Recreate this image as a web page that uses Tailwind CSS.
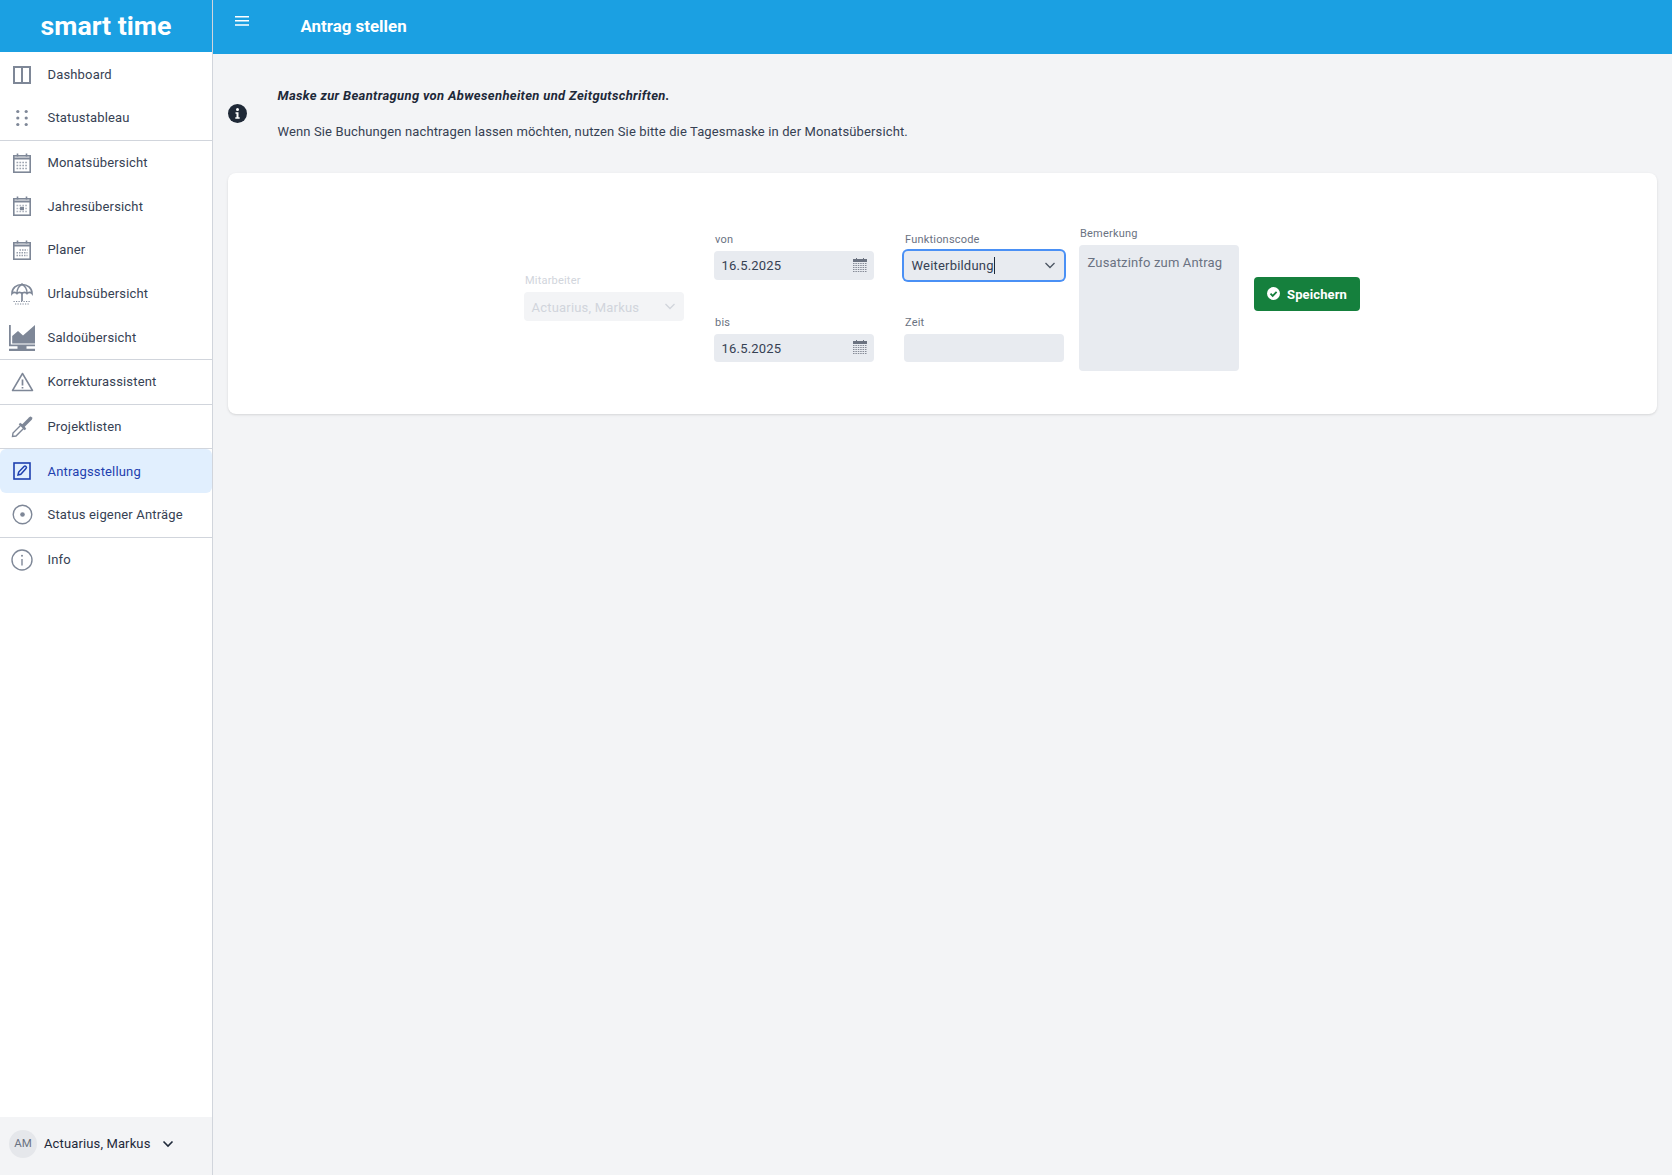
<!DOCTYPE html>
<html lang="de">
<head>
<meta charset="UTF-8" />
<title>smart time - Antrag stellen</title>
<script src="https://cdn.jsdelivr.net/npm/@tailwindcss/browser@4"></script>
</head>
<body class="bg-gray-100 font-[Roboto,sans-serif] text-gray-700">
<div class="flex h-[1175px] w-[1672px] overflow-hidden">

  <!-- sidebar -->
  <aside class="flex w-[213px] shrink-0 flex-col border-r border-gray-300 bg-white">
    <div class="flex h-[52px] shrink-0 items-center justify-center bg-[#1ba0e2] text-[26.7px] font-bold text-white">smart time</div>

    <nav class="flex-1 text-[13px] tracking-[0.16px]">
      <div class="border-b border-gray-300">
        <a class="flex h-[45px] items-center">
          <span class="mr-[3.5px] flex w-[44px] justify-center text-[#7e8797]">
            <svg width="20" height="20" viewBox="0 0 20 20" fill="none" stroke="currentColor" stroke-width="2"><rect x="2" y="2" width="16" height="16"/><path d="M10 2v16"/></svg>
          </span>Dashboard</a>
        <a class="flex h-[43px] items-center pb-[2px]">
          <span class="mr-[3.5px] flex w-[44px] justify-center text-[#7e8797]">
            <svg width="20" height="20" viewBox="0 0 20 20" fill="currentColor"><circle cx="5.800" cy="3.500" r="1.600"/><circle cx="14.200" cy="3.500" r="1.600"/><circle cx="5.800" cy="10" r="1.600"/><circle cx="14.200" cy="10" r="1.600"/><circle cx="5.800" cy="16.500" r="1.600"/><circle cx="14.200" cy="16.500" r="1.600"/></svg>
          </span>Statustableau</a>
      </div>

      <div class="border-b border-gray-300">
        <a class="flex h-[43.6px] items-center">
          <span class="mr-[3.5px] flex w-[44px] justify-center text-[#7e8797]">
            <svg width="20" height="20" viewBox="0 0 20 20" fill="none" stroke="currentColor"><rect x="1.800" y="2.800" width="16.400" height="16.400" stroke-width="1.600"/><path d="M1.800 5.500h16.400" stroke-width="2"/><path d="M5.500 .5v3M14.500 .5v3" stroke-width="1.600"/><path d="M4.500 9.500h11M4.500 12.500h11M4.500 15.500h11" stroke-width="1.700" stroke-dasharray="1.700 1.200" opacity=".75"/></svg>
          </span>Monatsübersicht</a>
        <a class="flex h-[43.6px] items-center">
          <span class="mr-[3.5px] flex w-[44px] justify-center text-[#7e8797]">
            <svg width="20" height="20" viewBox="0 0 20 20" fill="none" stroke="currentColor"><rect x="1.800" y="2.800" width="16.400" height="16.400" stroke-width="1.600"/><path d="M1.800 5.500h16.400" stroke-width="2"/><path d="M5.500 .5v3M14.500 .5v3" stroke-width="1.600"/><path d="M4.500 9.500h11M4.500 12.500h11M4.500 15.500h11" stroke-width="1.700" stroke-dasharray="1.700 1.200" opacity=".6"/><rect x="8" y="10.800" width="4" height="3.400" fill="currentColor" stroke="none"/></svg>
          </span>Jahresübersicht</a>
        <a class="flex h-[43.6px] items-center">
          <span class="mr-[3.5px] flex w-[44px] justify-center text-[#7e8797]">
            <svg width="20" height="20" viewBox="0 0 20 20" fill="none" stroke="currentColor"><rect x="1.800" y="2.800" width="16.400" height="16.400" stroke-width="1.600"/><path d="M1.800 5.500h16.400" stroke-width="2"/><path d="M5.500 .5v3M14.500 .5v3" stroke-width="1.600"/><path d="M7.500 10h8M4.500 12.700h11M4.500 15.400h11" stroke-width="1.500" stroke-dasharray="1.500 1" opacity=".8"/></svg>
          </span>Planer</a>
        <a class="flex h-[43.6px] items-center">
          <span class="mr-[3.5px] flex w-[44px] justify-center text-[#7e8797]">
            <svg width="22" height="22" viewBox="0 0 22 22" fill="none" stroke="currentColor" stroke-width="1.700"><path d="M1 10.500C1 5 5.500 1.500 11 1.500S21 5 21 10.500c-1.200-1.600-3.800-1.600-5 0-1.200-1.600-3.800-1.600-5 0-1.200-1.600-3.800-1.600-5 0-1.200-1.600-3.800-1.600-5 0Z"/><path d="M6 10c0-4 2-7 5-8.500 3 1.500 5 4.500 5 8.500" stroke-width="1.400"/><path d="M11 .5v1M11 9.500v8.500"/><path d="M2.500 18.500h17M4 21h14" stroke-width="1.200" stroke-dasharray="1.200 1.300"/></svg>
          </span>Urlaubsübersicht</a>
        <a class="flex h-[43.6px] items-center pt-[1px]">
          <span class="mr-[3.5px] flex w-[44px] justify-center text-[#7e8797]">
            <svg width="26" height="26" viewBox="0 0 26 26" fill="currentColor"><path d="M0 0h1.800v20H0z"/><path d="M3.200 18.500V11l5.800-5 5 4.500L26 0v18.500Z"/><path d="M0 19.500h26v1.800H0zM8.500 21.300h9v2.500h-9zM0 23.800h26V26H0z"/></svg>
          </span>Saldoübersicht</a>
      </div>

      <div class="border-b border-gray-300">
        <a class="flex h-[44px] items-center">
          <span class="mr-[3.5px] flex w-[44px] justify-center text-[#7e8797]">
            <svg width="23" height="20" viewBox="0 0 23 20" fill="none" stroke="currentColor" stroke-width="1.500"><path d="M11.500 1.500 1.500 18.500h20Z" stroke-linejoin="round"/><path d="M11.500 7.500v6M11.500 15v1.500" stroke-width="1.700"/></svg>
          </span>Korrekturassistent</a>
      </div>

      <div class="border-b border-gray-300">
        <a class="flex h-[43px] items-center">
          <span class="mr-[3.5px] flex w-[44px] justify-center text-[#7e8797]">
            <svg width="23" height="23" viewBox="0 0 23 23" fill="none" stroke="currentColor"><path d="M10.500 9.500 13.500 12.500 5 21l-3.500.500L2 18Z" stroke-width="1.400"/><path d="m8.500 8.500 6 6" stroke-width="2.200"/><path d="m12.500 10.500 7-7" stroke-width="3.600" stroke-linecap="round"/></svg>
          </span>Projektlisten</a>
      </div>

      <div class="border-b border-gray-300">
        <a class="flex h-[44px] items-center rounded-md bg-[#e1effe] pt-[1px] text-[#1e40af]">
          <span class="mr-[3.5px] flex w-[44px] justify-center">
            <svg width="18" height="18" viewBox="0 0 18 18" fill="none" stroke="currentColor" stroke-width="1.600"><rect x="1" y="1" width="16" height="16"/><path d="M5 13l.7-3L11 4.500a1.300 1.300 0 0 1 2 2L7.800 12.300Z" stroke-width="1.500"/></svg>
          </span>Antragsstellung</a>
        <a class="flex h-[44px] items-center">
          <span class="mr-[3.5px] flex w-[44px] justify-center text-[#7e8797]">
            <svg width="21" height="21" viewBox="0 0 21 21" fill="none" stroke="currentColor" stroke-width="1.400"><circle cx="10.500" cy="10.500" r="9.300"/><circle cx="10.500" cy="10.500" r="2.300" fill="currentColor" stroke="none"/></svg>
          </span>Status eigener Anträge</a>
      </div>

      <a class="flex h-[44px] items-center">
        <span class="mr-[3.5px] flex w-[44px] justify-center text-[#7e8797]">
          <svg width="22" height="22" viewBox="0 0 22 22" fill="none" stroke="currentColor" stroke-width="1.400"><circle cx="11" cy="11" r="10"/><path d="M11 10v6.500" stroke-width="1.400"/><circle cx="11" cy="6.800" r="1" fill="currentColor" stroke="none"/></svg>
        </span>Info</a>
    </nav>

    <div class="flex h-[58px] shrink-0 items-center bg-gray-100 pb-[4px] pl-[9px] text-[13px] tracking-[0.13px] text-gray-800">
      <span class="flex h-[28px] w-[28px] items-center justify-center rounded-full bg-gray-200 text-[11.500px] tracking-normal text-gray-500">AM</span>
      <span class="ml-[7px]">Actuarius, Markus</span>
      <svg class="ml-[11px]" width="12" height="12" viewBox="0 0 12 12" fill="none" stroke="currentColor" stroke-width="1.600"><path d="m1.500 3.500 4.500 4.500 4.500-4.500"/></svg>
    </div>
  </aside>

  <!-- main -->
  <main class="flex min-w-0 flex-1 flex-col">
    <header class="flex h-[54px] shrink-0 items-center bg-[#1ba0e2] text-white">
      <svg class="mb-[12px] ml-[21.500px]" width="14" height="12" viewBox="0 0 14 12" fill="currentColor"><path d="M0 1h14v1.600H0zM0 5h14v1.600H0zM0 9.200h14v1.600H0z"/></svg>
      <h1 class="ml-[52px] text-[16.900px] font-bold">Antrag stellen</h1>
    </header>

    <section class="flex h-[119px] items-center pl-[15px] text-[13px] text-gray-700">
      <svg width="19" height="19" viewBox="0 0 19 19" class="shrink-0"><circle cx="9.500" cy="9.500" r="9.500" fill="#1f2937"/><circle cx="9.500" cy="5.500" r="1.500" fill="#fff"/><path d="M7.500 8.200h3v5h1.200v1.500H7.300v-1.500h1.200V9.700h-1z" fill="#fff"/></svg>
      <div class="ml-[30.500px]">
        <p class="font-bold italic tracking-[0.34px] text-gray-800">Maske zur Beantragung von Abwesenheiten und Zeitgutschriften.</p>
        <p class="mt-[16px] tracking-[0.13px]">Wenn Sie Buchungen nachtragen lassen möchten, nutzen Sie bitte die Tagesmaske in der Monatsübersicht.</p>
      </div>
    </section>

    <div class="mx-[15px] flex h-[241px] items-center justify-center gap-[15px] rounded-lg bg-white pr-[1px] text-[13px] tracking-[0.2px] shadow">
      <!-- Mitarbeiter -->
      <div class="mr-[15px] mt-[7px] w-[160px]">
        <label class="mb-[3px] block pl-[1px] text-[11px] leading-[16px] text-gray-300">Mitarbeiter</label>
        <div class="flex h-[29px] items-center justify-between rounded bg-gray-100 pl-[7.500px] pr-[8px] pt-[2px] text-gray-300">
          Actuarius, Markus
          <svg class="mb-[3px]" width="12" height="12" viewBox="0 0 12 12" fill="none" stroke="currentColor" stroke-width="1.300"><path d="m1.500 4 4.500 4.500L10.500 4"/></svg>
        </div>
      </div>

      <!-- von / bis -->
      <div class="mr-[15px] mt-[7px] w-[160px]">
        <label class="mb-[3px] block pl-[1px] text-[11px] leading-[16px] text-gray-500">von</label>
        <div class="flex h-[29px] items-center justify-between rounded bg-[#e8ebf0] pl-[7.500px] pr-[7px]">
          16.5.2025
          <svg class="mb-[2px]" width="14" height="14" viewBox="0 0 14 14" fill="none" stroke="#6b7280"><path d="M0 2.500h14" stroke-width="3"/><path d="M3.500 0v1M10.500 0v1"/><path d="M0 5.500h14M0 7.500h14M0 9.500h14M0 11.500h14M0 13.500h14" stroke-dasharray="1.500 .9" opacity=".8"/></svg>
        </div>
        <label class="mb-[3px] mt-[35px] block pl-[1px] text-[11px] leading-[16px] text-gray-500">bis</label>
        <div class="flex h-[28px] items-center justify-between rounded bg-[#e8ebf0] pl-[7.500px] pr-[7px] pt-[1px]">
          16.5.2025
          <svg class="mb-[3px]" width="14" height="14" viewBox="0 0 14 14" fill="none" stroke="#6b7280"><path d="M0 2.500h14" stroke-width="3"/><path d="M3.500 0v1M10.500 0v1"/><path d="M0 5.500h14M0 7.500h14M0 9.500h14M0 11.500h14M0 13.500h14" stroke-dasharray="1.500 .9" opacity=".8"/></svg>
        </div>
      </div>

      <!-- Funktionscode / Zeit -->
      <div class="mt-[7px] w-[160px]">
        <label class="mb-[3px] block pl-[1px] text-[11px] leading-[16px] text-gray-500">Funktionscode</label>
        <div class="relative flex h-[29px] items-center justify-between rounded bg-[#e8ebf0] pl-[7.500px] pr-[8px] text-gray-700 ring-2 ring-[#4a90f5]">
          <span class="border-r border-gray-800 leading-[17px]">Weiterbildung</span>
          <svg class="mb-[1px]" width="12" height="12" viewBox="0 0 12 12" fill="none" stroke="#4b5563" stroke-width="1.300"><path d="m1.500 4 4.500 4.500L10.500 4"/></svg>
        </div>
        <label class="mb-[3px] mt-[35px] block pl-[1px] text-[11px] leading-[16px] text-gray-500">Zeit</label>
        <div class="h-[28px] rounded bg-[#e8ebf0]"></div>
      </div>

      <!-- Bemerkung -->
      <div class="mt-[10px] w-[160px]">
        <label class="mb-[3px] block pl-[1px] text-[11px] leading-[16px] text-gray-500">Bemerkung</label>
        <div class="h-[126px] rounded bg-[#e8ebf0] px-[8.500px] py-[9px] leading-[17px] tracking-[0.15px] text-gray-500">Zusatzinfo zum Antrag</div>
      </div>

      <button class="mt-[1px] flex h-[34px] w-[106px] items-center justify-center rounded-sm bg-[#15803d] font-bold tracking-[0.1px] text-white">
        <svg class="mb-[1px] mr-[7px]" width="13" height="13" viewBox="0 0 13 13"><circle cx="6.500" cy="6.500" r="6.500" fill="#fff"/><path d="m3.500 6.700 2.200 2.200 3.900-4" fill="none" stroke="#15803d" stroke-width="1.800"/></svg>
        <span class="pt-[1px]">Speichern</span>
      </button>
    </div>
  </main>
</div>
</body>
</html>
